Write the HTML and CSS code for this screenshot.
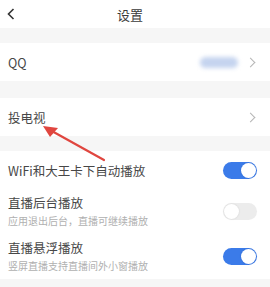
FILE: index.html
```html
<!DOCTYPE html>
<html lang="zh-CN">
<head>
  <meta charset="UTF-8">
  <title>设置</title>
  <link rel="stylesheet" href="styles.css">
</head>
<body>
  <div class="page">
    <div class="topbar">
      <svg class="back" width="8" height="12" viewBox="0 0 8 12"><path d="M6.5 1 L1.5 6 L6.5 11" fill="none" stroke="#333" stroke-width="1.6"/></svg>
      <span class="title">设置</span>
    </div>

    <div class="band band-top"></div>
    <div class="row">
      <span class="label">QQ</span>
      <span class="value"><span class="blur"></span><span class="chev"></span></span>
    </div>

    <div class="band band-mid"></div>
    <div class="row">
      <span class="label">投电视</span>
      <span class="chev"></span>
    </div>

    <div class="band band-low"></div>
    <div class="row">
      <span class="label">WiFi和大王卡下自动播放</span>
      <span class="switch on"></span>
    </div>
    <div class="row tall">
      <div class="text">
        <span class="label">直播后台播放</span>
        <span class="sub">应用退出后台，直播可继续播放</span>
      </div>
      <span class="switch"></span>
    </div>
    <div class="row tall">
      <div class="text">
        <span class="label">直播悬浮播放</span>
        <span class="sub">竖屏直播支持直播间外小窗播放</span>
      </div>
      <span class="switch on"></span>
    </div>
    <div class="band"></div>

    <!-- annotation arrow drawn over the list -->
    <svg class="arrow" width="270" height="287" viewBox="0 0 270 287">
      <line x1="104" y1="160" x2="50" y2="130" stroke="#e0463f" stroke-width="2.2" stroke-linecap="round"/>
      <polygon points="43,126 58,128 50,137" fill="#e0463f"/>
    </svg>
  </div>
</body>
</html>
```

FILE: styles.css
```css
* { box-sizing: border-box; }
body {
  margin: 0;
  font-family: "Noto Sans CJK SC", "Noto Sans", sans-serif;
  color: #444;
  background: #fff;
}
.page {
  position: relative;
  width: 270px;
  height: 287px;
  overflow: hidden;
}
.topbar {
  height: 28px;
  display: flex;
  align-items: center;
  justify-content: center;
  position: relative;
}
.back {
  position: absolute;
  left: 7px;
  top: 8px;
}
.title {
  font-size: 13px;
  margin-left: -10px;
  color: #3a3a3a;
}
.band { height: 15px; background: #f6f6f6; }
.band-mid { height: 17px; }
.row {
  height: 38px;
  padding: 0 13px 0 8px;
  display: flex;
  align-items: center;
  justify-content: space-between;
}
.row.tall { height: 45px; }
.label { font-size: 12.5px; color: #474747; }
.text { display: flex; flex-direction: column; gap: 3px; }
.sub { font-size: 10px; color: #b0b0b0; line-height: 14px; }
.text .label { line-height: 16px; }
.value { display: flex; align-items: center; gap: 9px; }
.blur {
  width: 38px;
  height: 11px;
  border-radius: 6px;
  background: #c5d4ef;
  filter: blur(2px);
}
.chev {
  width: 7px;
  height: 7px;
  border-top: 1.3px solid #b5b5b5;
  border-right: 1.3px solid #b5b5b5;
  transform: rotate(45deg);
  margin-right: 3px;
}
.switch {
  width: 34px;
  height: 17px;
  border-radius: 9px;
  background: #ececec;
  position: relative;
}
.switch::after {
  content: "";
  position: absolute;
  top: 1px;
  left: 1px;
  width: 15px;
  height: 15px;
  border-radius: 50%;
  background: #fff;
  box-shadow: 0 0 2px rgba(0,0,0,0.12);
}
.switch.on { background: #3b7be9; }
.switch.on::after { left: 18px; }
.arrow {
  position: absolute;
  left: 0;
  top: 0;
  pointer-events: none;
}
```
